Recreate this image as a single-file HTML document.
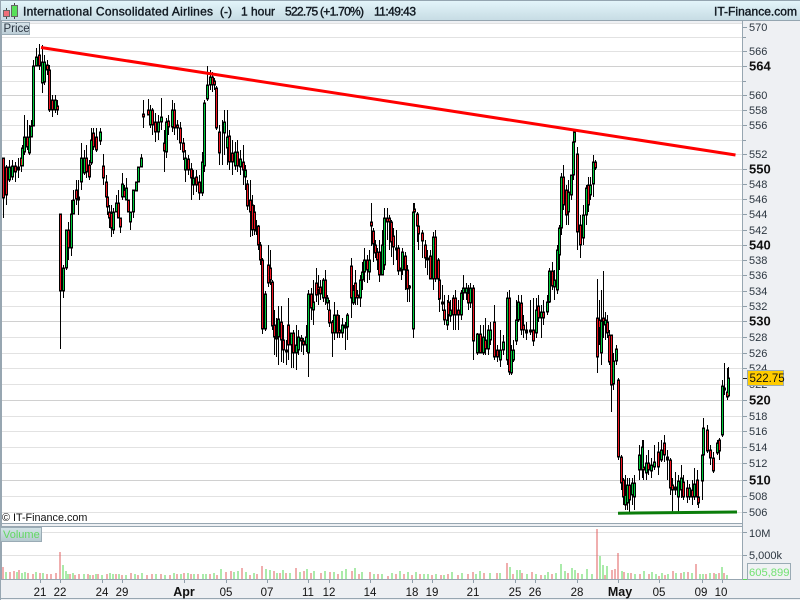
<!DOCTYPE html>
<html><head><meta charset="utf-8"><style>
html,body{margin:0;padding:0;background:#fff}
svg{display:block;font-family:"Liberation Sans",sans-serif}
</style></head><body>
<svg width="800" height="600" viewBox="0 0 800 600" xmlns="http://www.w3.org/2000/svg">
<defs>
<linearGradient id="tb" x1="0" y1="0" x2="0" y2="1"><stop offset="0" stop-color="#e4f6fb"/><stop offset="1" stop-color="#c6dbe3"/></linearGradient>
<linearGradient id="pb" x1="0" y1="0" x2="0" y2="1"><stop offset="0" stop-color="#d6e4ea"/><stop offset="1" stop-color="#bccdd6"/></linearGradient>
<linearGradient id="vb" x1="0" y1="0" x2="0" y2="1"><stop offset="0" stop-color="#d4e4e8"/><stop offset="1" stop-color="#b4c8ce"/></linearGradient>
</defs>
<rect width="800" height="600" fill="#eef0f3"/>
<rect x="1" y="23" width="741" height="500" fill="#fff"/>
<rect x="1" y="526" width="741" height="53" fill="#fff"/>
<rect width="800" height="21" fill="url(#tb)"/>
<path d="M0 .5H800M0 20.5H800" stroke="#94a5b0" fill="none" shape-rendering="crispEdges"/>
<path d="M.5 0V600M1.5 21V580M742.5 21V579M0 523.5H743M0 526.5H743M0 579.5H743M0 598.5H800" stroke="#97a6b1" fill="none" shape-rendering="crispEdges"/>
<g shape-rendering="crispEdges" fill="none">
<path d="M2 23.5H742M2 37.5H742M2 51.5H742M2 81.5H742M2 110.5H742M2 125.5H742M2 140.5H742M2 154.5H742M2 184.5H742M2 199.5H742M2 214.5H742M2 230.5H742M2 260.5H742M2 275.5H742M2 291.5H742M2 306.5H742M2 337.5H742M2 353.5H742M2 368.5H742M2 384.5H742M2 416.5H742M2 431.5H742M2 447.5H742M2 463.5H742M2 496.5H742M2 512.5H742M2 532.5H742M2 555.5H742" stroke="#e2e2e2"/>
<path d="M2 66.5H742M2 95.5H742M2 169.5H742M2 245.5H742M2 321.5H742M2 400.5H742M2 480.5H742" stroke="#d0d0d0"/>
<path d="M743 27.5h4M743 37.5h3M743 51.5h4M743 66.5h4M743 81.5h3M743 95.5h4M743 110.5h4M743 125.5h4M743 140.5h3M743 154.5h4M743 169.5h4M743 184.5h4M743 199.5h4M743 214.5h4M743 230.5h4M743 245.5h4M743 260.5h4M743 275.5h4M743 291.5h4M743 306.5h4M743 321.5h4M743 337.5h4M743 353.5h4M743 368.5h4M743 400.5h4M743 416.5h4M743 431.5h4M743 447.5h4M743 463.5h4M743 480.5h4M743 496.5h4M743 512.5h4M743 532.5h4M743 555.5h4" stroke="#8f9ea9"/>
<path d="M40.5 580v3M60.5 580v3M102.5 580v3M122.5 580v3M184.5 580v3M226.5 580v3M267.5 580v3M308.5 580v3M329.5 580v3M370.5 580v3M412.5 580v3M432.5 580v3M473.5 580v3M515.5 580v3M535.5 580v3M577.5 580v3M618.5 580v3M659.5 580v3M702.5 580v3M722.5 580v3" stroke="#8f9ea9"/>
</g>
<g fill="none" shape-rendering="crispEdges" stroke-width="1">
<path stroke="#e25c5c" d="M3 579v-12M10 579v-7M14 579v-8M19 579v-9M28 579v-6M33 579v-5M40 579v-6M47 579v-5M51 579v-5M56 579v-6M60 579v-27M70 579v-5M75 579v-4M79 579v-5M88 579v-5M93 579v-4M98 579v-5M107 579v-5M116 579v-5M122 579v-4M131 579v-6M138 579v-4M147 579v-4M152 579v-5M161 579v-5M170 579v-4M177 579v-5M184 579v-6M191 579v-5M198 579v-5M210 579v-5M217 579v-4M226 579v-7M231 579v-8M242 579v-11M250 579v-4M257 579v-5M262 579v-13M274 579v-8M280 579v-6M286 579v-6M296 579v-11M304 579v-8M311 579v-6M321 579v-6M330 579v-7M338 579v-5M352 579v-8M359 579v-5M370 579v-7M378 579v-5M388 579v-3M396 579v-5M404 579v-5M412 579v-4M420 579v-5M432 579v-4M441 579v-4M448 579v-5M458 579v-4M468 579v-5M473 579v-7M484 579v-6M497 579v-6M507 579v-16M513 579v-5M522 579v-6M532 579v-7M541 579v-4M552 579v-5M561 579v-6M568 579v-6M578 579v-6M597 579v-50M605 579v-4M612 579v-9M615 579v-10M618 579v-26M624 579v-7M631 579v-6M640 579v-5M649 579v-5M659 579v-3M665 579v-4M673 579v-8M681 579v-6M688 579v-7M696 579v-15M706 579v-5M714 579v-6M719 579v-6M724 579v-6"/>
<path stroke="#56d756" d="M6 579v-7M17 579v-7M22 579v-6M25 579v-7M36 579v-7M43 579v-6M63 579v-14M66 579v-8M68 579v-5M73 579v-6M84 579v-5M90 579v-4M96 579v-5M102 579v-4M110 579v-6M113 579v-5M119 579v-5M126 579v-4M135 579v-5M142 579v-6M156 579v-5M165 579v-4M174 579v-6M181 579v-5M188 579v-6M194 579v-5M203 579v-5M206 579v-5M214 579v-6M221 579v-10M234 579v-7M238 579v-8M246 579v-7M254 579v-6M266 579v-10M270 579v-9M277 579v-6M283 579v-9M290 579v-6M300 579v-7M307 579v-10M314 579v-8M325 579v-8M334 579v-7M342 579v-8M346 579v-10M355 579v-11M362 579v-7M374 579v-5M382 579v-5M392 579v-6M400 579v-8M408 579v-7M416 579v-7M424 579v-5M428 579v-5M436 579v-5M444 579v-4M452 579v-7M462 579v-6M476 579v-5M480 579v-8M490 579v-6M500 579v-6M510 579v-12M517 579v-9M520 579v-9M527 579v-5M536 579v-5M545 579v-4M548 579v-7M556 579v-6M561 579v-15M565 579v-8M572 579v-11M575 579v-9M582 579v-5M587 579v-10M592 579v-5M600 579v-23M603 579v-14M607 579v-13M622 579v-8M628 579v-6M635 579v-5M644 579v-8M652 579v-7M656 579v-5M662 579v-6M668 579v-5M676 579v-6M684 579v-7M692 579v-6M700 579v-5M703 579v-5M710 579v-6M716 579v-5M722 579v-12M727 579v-4"/>
<path stroke="#56d756" d="M743 579.5h4" />
</g>
<g transform="translate(.5 0)" fill="none" shape-rendering="crispEdges">
<path stroke="#000" stroke-width="1" d="M3 158V218M6 165V205M9 160V182M12 160V180M15 162V182M18 158V178M21 150V172M22 145V166M24 115V155M27 120V150M29 125V155M31 120V137M33 60V126M36 48V66M39 44V70M42 45V93M44 55V85M47 60V75M49 65V112M52 95V117M55 95V113M57 100V115M60 214V349M63 265V298M66 237V270M68 222V260M71 200V256M73 190V214M76 180V205M78 180V215M81 143V190M84 150V175M86 145V178M89 160V180M91 128V165M93 128V150M96 128V152M100 128V145M103 154V185M106 175V200M107 195V215M109 205V228M111 205V237M113 208V234M116 195V212M118 190V218M120 218V233M122 173V200M124 185V197M126 178V200M128 200V212M130 212V230M133 190V218M136 182V191M138 167V182M141 154V167M143 100V128M148 99V115M150 105V128M152 108V135M155 113V142M158 115V140M161 98V130M164 130V172M166 118V158M168 115V135M172 100V132M174 103V135M177 120V140M180 122V150M183 138V160M185 150V182M188 155V175M191 163V200M193 170V195M196 170V192M199 175V200M202 152V196M204 100V172M207 66V101M210 70V90M212 72V92M214 78V90M216 86V130M219 125V165M222 120V165M224 110V155M227 110V165M229 130V170M232 140V175M235 142V170M237 140V172M240 150V175M243 145V185M245 165V190M247 180V210M250 180V237M252 195V236M254 205V235M256 220V235M258 225V250M260 242V265M262 258V334M265 291V331M268 245V287M270 250V285M272 280V330M274 310V355M276 318V357M278 306V365M281 306V362M283 325V363M286 340V365M288 298V360M291 333V368M293 330V368M296 325V370M298 330V355M301 335V352M303 338V355M306 325V352M308 290V377M311 288V320M313 280V325M316 268V302M318 275V305M320 280V300M323 278V302M325 270V305M327 295V310M329 300V327M332 320V357M334 302V340M337 310V338M339 315V338M342 318V338M345 322V350M347 313V340M351 258V318M353 285V305M355 270V305M357 290V305M360 275V307M362 262V290M364 248V282M367 255V283M369 250V280M371 203V246M373 228V262M375 240V258M377 248V270M379 240V282M382 230V270M384 208V270M387 208V240M389 215V250M391 220V257M393 228V265M396 230V260M398 245V275M401 262V280M402 248V275M405 252V290M407 265V302M409 285V302M413 203V338M414 203V225M417 212V242M418 222V250M422 230V258M425 240V268M427 250V275M430 250V279M433 232V290M435 230V282M438 258V300M439 278V312M442 285V311M444 295V325M447 300V330M448 295V320M450 300V322M453 295V330M455 290V330M458 300V330M461 290V320M463 275V300M466 283V300M468 285V310M470 283V308M473 285V360M477 333V355M480 325V353M483 325V355M485 318V355M488 325V355M490 322V345M494 305V360M497 345V362M500 330V367M503 335V355M507 292V365M509 290V375M511 345V375M513 340V362M516 300V345M518 295V322M521 295V335M523 315V338M526 322V340M530 300V335M533 298V346M536 298V338M538 295V322M541 305V338M543 300V325M547 295V315M549 268V303M552 262V290M554 270V300M557 245V294M559 225V270M561 173V235M563 165V210M566 185V225M568 180V225M571 177V200M573 140V180M574 130V145M577 147V250M580 215V258M583 205V245M586 185V225M588 177V212M590 177V200M593 155V197M595 160V170M597 279V373M599 300V345M601 290V365M603 271V338M605 312V340M607 315V338M609 330V365M611 335V412M613 353V390M616 345V365M618 378V460M621 455V490M623 478V505M625 475V510M627 478V510M629 478V512M632 478V505M634 475V510M639 445V480M642 440V478M643 440V480M646 455V480M648 450V475M651 458V478M654 445V470M658 442V475M661 440V462M664 435V462M667 450V480M670 458V495M672 478V512M675 472V495M678 475V512M681 465V498M683 475V500M687 480V503M689 484V500M692 480V505M694 468V500M697 470V505M698 490V508M702 445V500M703 418V465M707 425V453M710 445V465M713 452V473M717 440V455M719 438V460M722 380V437M724 363V395M727 368V400M728 367V397"/>
<path stroke="#000" stroke-width="3" stroke-linecap="square" d="M3 159V197M6 168V194M15 167V171M21 159V165M27 138V146M39 56V65M47 66V69M49 71V109M52 101V109M57 107V109M60 215V290M68 231V247M76 191V198M86 159V171M89 166V176M93 134V146M96 138V149M103 167V177M106 183V196M107 198V206M109 213V217M111 214V227M118 204V217M120 219V226M124 191V196M128 201V211M143 115V116M148 111V114M152 111V124M155 123V131M164 144V150M168 122V126M174 111V127M177 126V127M180 129V142M183 144V151M188 160V169M191 170V177M196 178V184M199 183V192M212 78V84M214 82V84M216 89V127M219 133V152M229 137V161M232 154V161M237 153V165M243 163V169M247 185V205M250 201V211M252 206V229M254 213V229M258 227V244M260 246V259M262 261V328M268 266V282M270 269V279M272 283V325M274 326V336M281 323V339M283 341V349M288 326V344M293 334V352M301 339V340M303 342V344M311 295V307M316 284V294M318 288V289M320 288V293M325 281V297M329 311V322M332 323V332M337 316V332M339 331V332M351 267V297M355 284V297M357 296V297M367 261V269M371 223V225M373 232V243M375 246V252M377 253V259M379 253V274M387 219V221M389 219V221M391 223V241M393 237V246M398 249V270M405 257V269M407 271V288M414 210V211M417 215V225M418 227V233M422 234V240M425 246V257M430 257V278M435 238V278M438 261V278M439 281V298M444 311V319M448 303V314M453 299V314M455 299V314M458 311V314M468 294V302M473 289V340M480 335V352M485 341V348M494 323V356M497 351V356M509 299V371M521 304V329M523 326V329M533 331V340M538 307V317M543 313V317M552 272V285M563 178V204M566 191V214M577 155V231M580 226V244M588 186V204M595 163V167M597 319V356M599 321V327M603 319V321M607 323V332M609 336V361M611 336V384M618 381V456M621 458V482M623 481V496M629 486V499M643 468V469M648 464V469M658 453V466M664 444V454M670 461V487M672 486V489M683 483V496M687 489V496M692 491V496M697 481V496M698 498V502M707 431V450M710 451V457M713 459V470M719 441V450M724 389V389M727 393V396"/>
<path stroke="#000" stroke-width="3" stroke-linecap="square" d="M9 168V179M12 167V176M18 168V169M22 149V165M24 138V151M29 138V152M31 127V136M33 67V125M36 58V65M42 63V82M44 63V81M55 101V109M63 269V290M66 231V267M71 215V247M73 201V213M78 198V199M81 159V181M84 159V172M91 141V162M100 133V140M113 213V229M116 204V211M122 185V196M126 189V199M130 213V221M133 191V211M136 183V190M138 168V181M141 159V166M150 111V124M158 123V131M161 118V121M166 123V151M172 111V126M185 159V169M193 179V184M202 163V192M204 104V165M207 86V98M210 78V84M224 123V132M227 138V147M235 153V165M240 160V166M245 171V176M256 229V230M265 295V328M276 338V338M278 320V336M286 351V351M291 334V344M296 346V352M298 338V349M306 338V344M308 295V352M313 303V309M323 281V297M327 299V302M334 316V332M342 326V332M345 326V327M347 316V326M353 291V302M360 281V297M362 273V279M364 261V271M369 261V271M382 246V274M384 219V264M396 249V249M401 269V270M402 253V269M409 287V287M413 213V328M427 259V259M433 238V278M442 303V303M447 321V324M450 311V315M461 294V314M463 289V292M466 289V292M470 289V302M477 335V352M483 338V352M488 331V348M490 331V339M500 351V359M503 343V349M507 299V359M511 351V372M513 351V359M516 321V340M518 303V319M526 331V332M530 331V331M536 311V332M541 313V317M547 303V311M549 272V301M554 281V286M557 251V289M559 229V254M561 178V227M568 193V211M571 176V194M573 143V174M574 133V141M583 216V237M586 189V214M590 186V194M593 163V183M601 322V352M605 321V324M613 362V383M616 350V360M625 496V504M627 486V502M632 484V494M634 484V496M639 456V469M642 448V469M646 464V472M651 466V470M654 463V466M661 451V459M667 458V459M675 488V489M678 482V496M681 479V489M689 489V496M694 485V496M702 456V480M703 429V454M717 444V452M722 387V434M728 379V395"/>
<path stroke="#ee1420" stroke-width="1" d="M3 159V197M6 168V194M15 167V171M21 159V165M27 138V146M39 56V65M47 66V69M49 71V109M52 101V109M57 107V109M60 215V290M68 231V247M76 191V198M86 159V171M89 166V176M93 134V146M96 138V149M103 167V177M106 183V196M107 198V206M109 213V217M111 214V227M118 204V217M120 219V226M124 191V196M128 201V211M143 115V116M148 111V114M152 111V124M155 123V131M164 144V150M168 122V126M174 111V127M177 126V127M180 129V142M183 144V151M188 160V169M191 170V177M196 178V184M199 183V192M212 78V84M214 82V84M216 89V127M219 133V152M229 137V161M232 154V161M237 153V165M243 163V169M247 185V205M250 201V211M252 206V229M254 213V229M258 227V244M260 246V259M262 261V328M268 266V282M270 269V279M272 283V325M274 326V336M281 323V339M283 341V349M288 326V344M293 334V352M301 339V340M303 342V344M311 295V307M316 284V294M318 288V289M320 288V293M325 281V297M329 311V322M332 323V332M337 316V332M339 331V332M351 267V297M355 284V297M357 296V297M367 261V269M371 223V225M373 232V243M375 246V252M377 253V259M379 253V274M387 219V221M389 219V221M391 223V241M393 237V246M398 249V270M405 257V269M407 271V288M414 210V211M417 215V225M418 227V233M422 234V240M425 246V257M430 257V278M435 238V278M438 261V278M439 281V298M444 311V319M448 303V314M453 299V314M455 299V314M458 311V314M468 294V302M473 289V340M480 335V352M485 341V348M494 323V356M497 351V356M509 299V371M521 304V329M523 326V329M533 331V340M538 307V317M543 313V317M552 272V285M563 178V204M566 191V214M577 155V231M580 226V244M588 186V204M595 163V167M597 319V356M599 321V327M603 319V321M607 323V332M609 336V361M611 336V384M618 381V456M621 458V482M623 481V496M629 486V499M643 468V469M648 464V469M658 453V466M664 444V454M670 461V487M672 486V489M683 483V496M687 489V496M692 491V496M697 481V496M698 498V502M707 431V450M710 451V457M713 459V470M719 441V450M727 393V396"/>
<path stroke="#00c93c" stroke-width="1" d="M9 168V179M12 167V176M22 149V165M24 138V151M29 138V152M31 127V136M33 67V125M36 58V65M42 63V82M44 63V81M55 101V109M63 269V290M66 231V267M71 215V247M73 201V213M81 159V181M84 159V172M91 141V162M100 133V140M113 213V229M116 204V211M122 185V196M126 189V199M130 213V221M133 191V211M136 183V190M138 168V181M141 159V166M150 111V124M158 123V131M161 118V121M166 123V151M172 111V126M185 159V169M193 179V184M202 163V192M204 104V165M207 86V98M210 78V84M224 123V132M227 138V147M235 153V165M240 160V166M245 171V176M265 295V328M278 320V336M291 334V344M296 346V352M298 338V349M306 338V344M308 295V352M313 303V309M323 281V297M327 299V302M334 316V332M342 326V332M347 316V326M353 291V302M360 281V297M362 273V279M364 261V271M369 261V271M382 246V274M384 219V264M402 253V269M413 213V328M433 238V278M447 321V324M450 311V315M461 294V314M463 289V292M466 289V292M470 289V302M477 335V352M483 338V352M488 331V348M490 331V339M500 351V359M503 343V349M507 299V359M511 351V372M513 351V359M516 321V340M518 303V319M536 311V332M541 313V317M547 303V311M549 272V301M554 281V286M557 251V289M559 229V254M561 178V227M568 193V211M571 176V194M573 143V174M574 133V141M583 216V237M586 189V214M590 186V194M593 163V183M601 322V352M605 321V324M613 362V383M616 350V360M625 496V504M627 486V502M632 484V494M634 484V496M639 456V469M642 448V469M646 464V472M651 466V470M654 463V466M661 451V459M678 482V496M681 479V489M689 489V496M694 485V496M702 456V480M703 429V454M717 444V452M722 387V434M728 379V395"/>
</g>
<path d="M41 47.5L735.5 155" stroke="#ff0000" stroke-width="3" fill="none"/>
<path d="M618 513.2L737 512" stroke="#0b7d0b" stroke-width="3" fill="none"/>
<g shape-rendering="crispEdges">
<path d="M6.5 8v11" stroke="#444" fill="none"/>
<rect x="3.5" y="10.5" width="6" height="6" fill="#ef6f78" stroke="#666"/>
<path d="M14.5 3v16" stroke="#444" fill="none"/>
<rect x="11.5" y="5.5" width="6" height="11" fill="#58e05a" stroke="#666"/>
</g>
<g font-size="12" fill="#101820" stroke="#101820" stroke-width=".4">
<text x="23" y="15.5" textLength="190" lengthAdjust="spacing">International Consolidated Airlines</text>
<text x="220" y="15.5">(-)</text>
<text x="241" y="15.5">1 hour</text>
<text x="285" y="15.5" textLength="79" lengthAdjust="spacing">522.75 (+1.70%)</text>
<text x="374" y="15.5" textLength="42" lengthAdjust="spacing">11:49:43</text>
<text x="714" y="15.5" textLength="83" lengthAdjust="spacing">IT-Finance.com</text>
</g>
<rect x="1.5" y="22.5" width="28" height="12" fill="url(#pb)" stroke="#9aabb5" shape-rendering="crispEdges"/>
<text x="3.5" y="32" font-size="11.5" fill="#2a3440">Price</text>
<text x="2" y="521" font-size="10.8" fill="#111">© IT-Finance.com</text>
<rect x="0.5" y="527.5" width="41" height="14" fill="url(#vb)" stroke="#9aabb5" shape-rendering="crispEdges"/>
<text x="3" y="538" font-size="11" fill="#62d862">Volume</text>
<g font-size="11" fill="#2c3640">
<text x="749" y="31">570</text><text x="749" y="55">566</text><text x="749" y="99">560</text><text x="749" y="114">558</text><text x="749" y="129">556</text><text x="749" y="158">552</text><text x="749" y="188">548</text><text x="749" y="203">546</text><text x="749" y="218">544</text><text x="749" y="234">542</text><text x="749" y="264">538</text><text x="749" y="279">536</text><text x="749" y="295">534</text><text x="749" y="310">532</text><text x="749" y="341">528</text><text x="749" y="357">526</text><text x="749" y="372">524</text><text x="749" y="388">522</text><text x="749" y="420">518</text><text x="749" y="435">516</text><text x="749" y="451">514</text><text x="749" y="467">512</text><text x="749" y="500">508</text><text x="749" y="516">506</text>
<text x="749" y="537">10M</text><text x="749" y="559">5,000k</text>
</g>
<g font-size="13" font-weight="bold" fill="#111">
<text x="749" y="70.5">564</text><text x="749" y="173.5">550</text><text x="749" y="249.5">540</text><text x="749" y="325.5">530</text><text x="749" y="404.5">520</text><text x="749" y="484.5">510</text>
</g>
<rect x="747.5" y="370.5" width="36" height="15" fill="#ffcc00" stroke="#9aabb5" shape-rendering="crispEdges"/>
<path d="M743 378.5h4" stroke="#222" shape-rendering="crispEdges"/>
<text x="749.5" y="382" font-size="11.5" fill="#111">522.75</text>
<rect x="747.5" y="563.5" width="43" height="16" fill="#f0f2f4" stroke="#9aabb5" shape-rendering="crispEdges"/>
<text x="749" y="576" font-size="11.2" fill="#72e272">605,899</text>
<g font-size="11.5" fill="#111" text-anchor="middle">
<text x="40" y="596">21</text><text x="60" y="596">22</text><text x="102" y="596">24</text><text x="122" y="596">29</text><text x="226" y="596">05</text><text x="267" y="596">07</text><text x="308" y="596">11</text><text x="329" y="596">12</text><text x="370" y="596">14</text><text x="412" y="596">18</text><text x="432" y="596">19</text><text x="473" y="596">21</text><text x="515" y="596">25</text><text x="535" y="596">26</text><text x="577" y="596">28</text><text x="659" y="596">05</text><text x="701" y="596">09</text><text x="721" y="596">10</text>
</g>
<g font-size="12.5" font-weight="bold" fill="#111" text-anchor="middle">
<text x="184" y="596">Apr</text><text x="620" y="596">May</text>
</g>
</svg>
</body></html>
